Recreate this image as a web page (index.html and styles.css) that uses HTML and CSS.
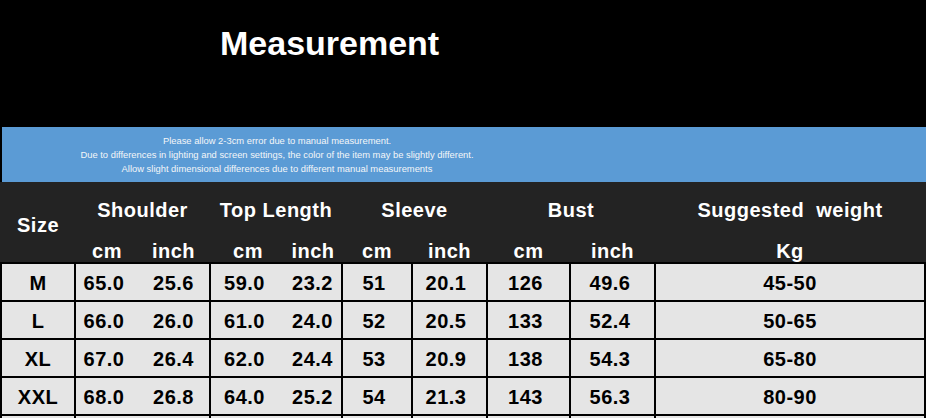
FILE: index.html
```html
<!DOCTYPE html>
<html lang="en">
<head>
<meta charset="utf-8">
<title>Measurement</title>
<link rel="stylesheet" href="styles.css">
</head>
<body>
<div class="page">
  <header class="title-bar">
    <h1 class="title">Measurement</h1>
  </header>
  <section class="notice">
    <div class="notice-text">
      <p>Please allow 2-3cm error due to manual measurement.</p>
      <p>Due to differences in lighting and screen settings, the color of the item may be slightly different.</p>
      <p>Allow slight dimensional differences due to different manual measurements</p>
    </div>
  </section>
  <section class="table">
    <div class="thead">
      <div class="th th-size">Size</div>
      <div class="th th-top c-shoulder">Shoulder</div>
      <div class="th th-top c-length">Top Length</div>
      <div class="th th-top c-sleeve-span">Sleeve</div>
      <div class="th th-top c-bust-span">Bust</div>
      <div class="th th-top c-weight">Suggested&nbsp; weight</div>

      <div class="th th-sub c-shoulder split"><span class="sh-a">cm</span><span class="sh-b">inch</span></div>
      <div class="th th-sub c-length split"><span class="tl-a">cm</span><span class="tl-b">inch</span></div>
      <div class="th th-sub c-sleeve-cm">cm</div>
      <div class="th th-sub c-sleeve-in">inch</div>
      <div class="th th-sub c-bust-cm">cm</div>
      <div class="th th-sub c-bust-in">inch</div>
      <div class="th th-sub c-weight">Kg</div>
    </div>
    <div class="tbody">
      <div class="row">
        <div class="td">M</div>
        <div class="td split"><span class="d-sh-a">65.0</span><span class="d-sh-b">25.6</span></div>
        <div class="td split"><span class="d-tl-a">59.0</span><span class="d-tl-b">23.2</span></div>
        <div class="td d-sleeve-cm">51</div>
        <div class="td d-sleeve-in">20.1</div>
        <div class="td d-bust-cm">126</div>
        <div class="td d-bust-in">49.6</div>
        <div class="td">45-50</div>
      </div>
      <div class="row">
        <div class="td">L</div>
        <div class="td split"><span class="d-sh-a">66.0</span><span class="d-sh-b">26.0</span></div>
        <div class="td split"><span class="d-tl-a">61.0</span><span class="d-tl-b">24.0</span></div>
        <div class="td d-sleeve-cm">52</div>
        <div class="td d-sleeve-in">20.5</div>
        <div class="td d-bust-cm">133</div>
        <div class="td d-bust-in">52.4</div>
        <div class="td">50-65</div>
      </div>
      <div class="row">
        <div class="td">XL</div>
        <div class="td split"><span class="d-sh-a">67.0</span><span class="d-sh-b">26.4</span></div>
        <div class="td split"><span class="d-tl-a">62.0</span><span class="d-tl-b">24.4</span></div>
        <div class="td d-sleeve-cm">53</div>
        <div class="td d-sleeve-in">20.9</div>
        <div class="td d-bust-cm">138</div>
        <div class="td d-bust-in">54.3</div>
        <div class="td">65-80</div>
      </div>
      <div class="row">
        <div class="td">XXL</div>
        <div class="td split"><span class="d-sh-a">68.0</span><span class="d-sh-b">26.8</span></div>
        <div class="td split"><span class="d-tl-a">64.0</span><span class="d-tl-b">25.2</span></div>
        <div class="td d-sleeve-cm">54</div>
        <div class="td d-sleeve-in">21.3</div>
        <div class="td d-bust-cm">143</div>
        <div class="td d-bust-in">56.3</div>
        <div class="td">80-90</div>
      </div>
      <div class="row">
        <div class="td"></div>
        <div class="td"></div>
        <div class="td"></div>
        <div class="td"></div>
        <div class="td"></div>
        <div class="td"></div>
        <div class="td"></div>
        <div class="td"></div>
      </div>
    </div>
  </section>
</div>
</body>
</html>
```

FILE: styles.css
```css
* { box-sizing: border-box; }

html, body {
  margin: 0;
  padding: 0;
  background: #000;
  overflow: hidden;
}

.page {
  width: 926px;
  height: 418px;
  overflow: hidden;
  font-family: "Liberation Sans", Arial, sans-serif;
}

.title-bar {
  height: 127px;
  background: #000;
  padding: 23px 0 0 220px;
}

.title {
  margin: 0;
  font-size: 34px;
  line-height: 40px;
  font-weight: bold;
  color: #fff;
}

.notice {
  height: 55px;
  background: #5b9bd5;
  border-left: 2px solid #000;
  padding-top: 7px;
}

.notice-text {
  width: 550px;
  text-align: center;
  color: #f4f6f8;
  font-size: 9.4px;
  line-height: 14px;
}

.notice-text p {
  margin: 0;
  white-space: nowrap;
}

.table {
  font-size: 20px;
  font-weight: bold;
  letter-spacing: 0.5px;
}

.thead {
  display: grid;
  grid-template-columns: 72px 133px 130px 68px 73px 81px 83px 268px;
  grid-template-rows: 38px 42px;
  column-gap: 2px;
  padding: 0 2px;
  background: #232323;
  color: #fff;
  height: 80px;
}

.th {
  text-align: center;
  line-height: 20px;
  white-space: nowrap;
}

.th-size {
  grid-column: 1;
  grid-row: 1 / 3;
  align-self: center;
  padding-top: 5px;
}

.th-top {
  grid-row: 1;
  padding-top: 18px;
}

.th-sub {
  grid-row: 2;
  align-self: end;
  padding-bottom: 1px;
}

.c-shoulder { grid-column: 2; }
.c-length { grid-column: 3; }
.c-sleeve-span { grid-column: 4 / 6; }
.c-bust-span { grid-column: 6 / 8; }
.c-weight { grid-column: 8; }
.c-sleeve-cm { grid-column: 4; }
.c-sleeve-in { grid-column: 5; }
.c-bust-cm { grid-column: 6; }
.c-bust-in { grid-column: 7; }

.split {
  display: flex;
}

.split span {
  display: block;
  text-align: center;
}

.sh-a { width: 62px; }
.sh-b { flex: 1; }
.tl-a { width: 74px; }
.tl-b { flex: 1; }

.tbody {
  display: grid;
  row-gap: 2px;
  padding-top: 2px;
  background: #000;
}

.row {
  display: grid;
  grid-template-columns: 72px 133px 130px 68px 73px 81px 83px 268px;
  column-gap: 2px;
  padding: 0 2px;
  height: 36px;
}

.td {
  background: #e5e5e5;
  color: #000;
  text-align: center;
  line-height: 34px;
  padding-top: 2px;
  white-space: nowrap;
}

.d-sh-a { width: 56px; }
.d-sh-b { flex: 1; padding-left: 6px; }
.d-tl-a { width: 67px; }
.d-tl-b { flex: 1; padding-left: 6px; }

.d-sleeve-cm { padding-right: 6px; }
.d-sleeve-in { padding-right: 7px; }
.d-bust-cm { padding-right: 6px; }
.d-bust-in { padding-right: 5px; }
```
